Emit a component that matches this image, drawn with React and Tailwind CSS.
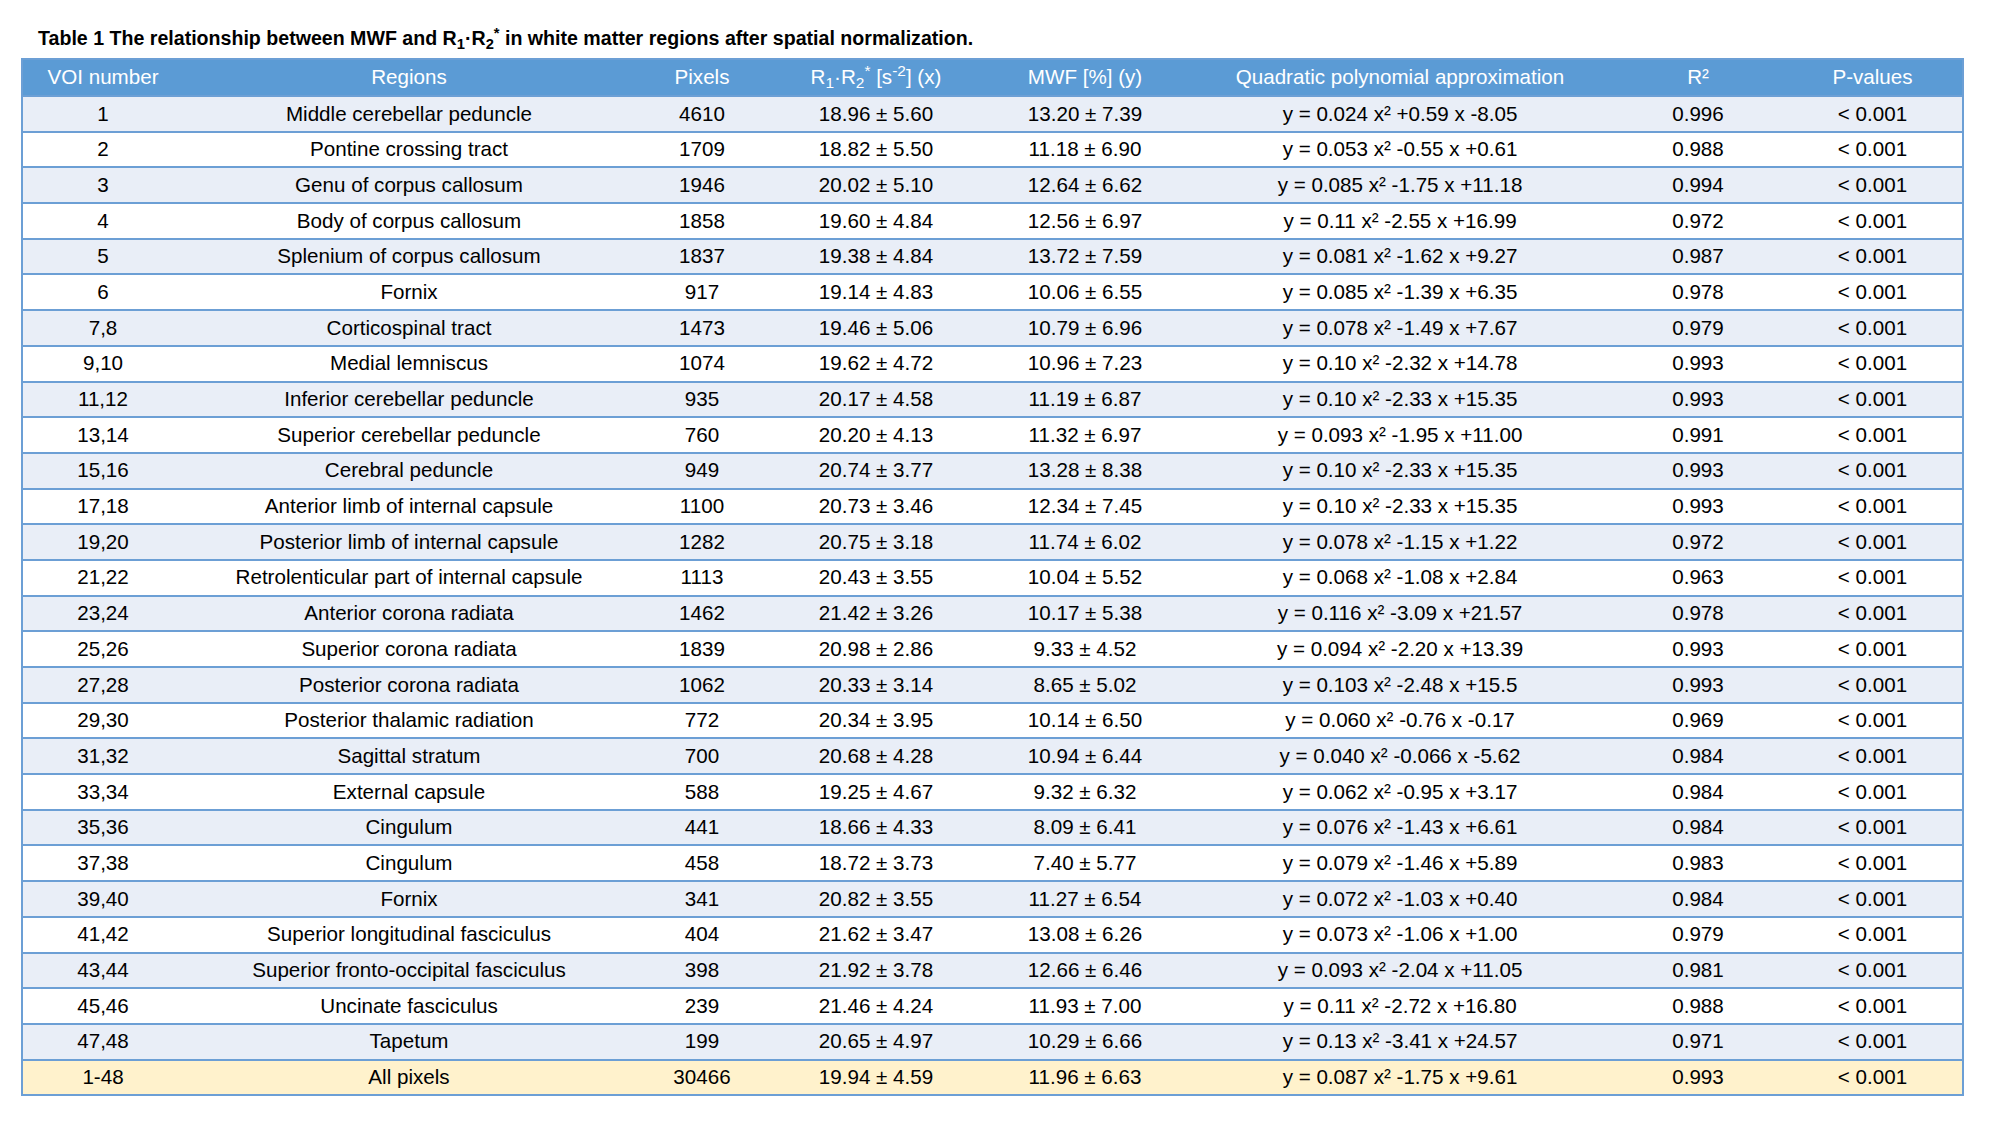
import React from "react";

const rows = [
  ["1", "Middle cerebellar peduncle", "4610", "18.96 ± 5.60", "13.20 ± 7.39", "0.024", "+0.59", "-8.05", "0.996"],
  ["2", "Pontine crossing tract", "1709", "18.82 ± 5.50", "11.18 ± 6.90", "0.053", "-0.55", "+0.61", "0.988"],
  ["3", "Genu of corpus callosum", "1946", "20.02 ± 5.10", "12.64 ± 6.62", "0.085", "-1.75", "+11.18", "0.994"],
  ["4", "Body of corpus callosum", "1858", "19.60 ± 4.84", "12.56 ± 6.97", "0.11", "-2.55", "+16.99", "0.972"],
  ["5", "Splenium of corpus callosum", "1837", "19.38 ± 4.84", "13.72 ± 7.59", "0.081", "-1.62", "+9.27", "0.987"],
  ["6", "Fornix", "917", "19.14 ± 4.83", "10.06 ± 6.55", "0.085", "-1.39", "+6.35", "0.978"],
  ["7,8", "Corticospinal tract", "1473", "19.46 ± 5.06", "10.79 ± 6.96", "0.078", "-1.49", "+7.67", "0.979"],
  ["9,10", "Medial lemniscus", "1074", "19.62 ± 4.72", "10.96 ± 7.23", "0.10", "-2.32", "+14.78", "0.993"],
  ["11,12", "Inferior cerebellar peduncle", "935", "20.17 ± 4.58", "11.19 ± 6.87", "0.10", "-2.33", "+15.35", "0.993"],
  ["13,14", "Superior cerebellar peduncle", "760", "20.20 ± 4.13", "11.32 ± 6.97", "0.093", "-1.95", "+11.00", "0.991"],
  ["15,16", "Cerebral peduncle", "949", "20.74 ± 3.77", "13.28 ± 8.38", "0.10", "-2.33", "+15.35", "0.993"],
  ["17,18", "Anterior limb of internal capsule", "1100", "20.73 ± 3.46", "12.34 ± 7.45", "0.10", "-2.33", "+15.35", "0.993"],
  ["19,20", "Posterior limb of internal capsule", "1282", "20.75 ± 3.18", "11.74 ± 6.02", "0.078", "-1.15", "+1.22", "0.972"],
  ["21,22", "Retrolenticular part of internal capsule", "1113", "20.43 ± 3.55", "10.04 ± 5.52", "0.068", "-1.08", "+2.84", "0.963"],
  ["23,24", "Anterior corona radiata", "1462", "21.42 ± 3.26", "10.17 ± 5.38", "0.116", "-3.09", "+21.57", "0.978"],
  ["25,26", "Superior corona radiata", "1839", "20.98 ± 2.86", "9.33 ± 4.52", "0.094", "-2.20", "+13.39", "0.993"],
  ["27,28", "Posterior corona radiata", "1062", "20.33 ± 3.14", "8.65 ± 5.02", "0.103", "-2.48", "+15.5", "0.993"],
  ["29,30", "Posterior thalamic radiation", "772", "20.34 ± 3.95", "10.14 ± 6.50", "0.060", "-0.76", "-0.17", "0.969"],
  ["31,32", "Sagittal stratum", "700", "20.68 ± 4.28", "10.94 ± 6.44", "0.040", "-0.066", "-5.62", "0.984"],
  ["33,34", "External capsule", "588", "19.25 ± 4.67", "9.32 ± 6.32", "0.062", "-0.95", "+3.17", "0.984"],
  ["35,36", "Cingulum", "441", "18.66 ± 4.33", "8.09 ± 6.41", "0.076", "-1.43", "+6.61", "0.984"],
  ["37,38", "Cingulum", "458", "18.72 ± 3.73", "7.40 ± 5.77", "0.079", "-1.46", "+5.89", "0.983"],
  ["39,40", "Fornix", "341", "20.82 ± 3.55", "11.27 ± 6.54", "0.072", "-1.03", "+0.40", "0.984"],
  ["41,42", "Superior longitudinal fasciculus", "404", "21.62 ± 3.47", "13.08 ± 6.26", "0.073", "-1.06", "+1.00", "0.979"],
  ["43,44", "Superior fronto-occipital fasciculus", "398", "21.92 ± 3.78", "12.66 ± 6.46", "0.093", "-2.04", "+11.05", "0.981"],
  ["45,46", "Uncinate fasciculus", "239", "21.46 ± 4.24", "11.93 ± 7.00", "0.11", "-2.72", "+16.80", "0.988"],
  ["47,48", "Tapetum", "199", "20.65 ± 4.97", "10.29 ± 6.66", "0.13", "-3.41", "+24.57", "0.971"],
];

const total = ["1-48", "All pixels", "30466", "19.94 ± 4.59", "11.96 ± 6.63", "0.087", "-1.75", "+9.61", "0.993"];

const cols = "grid grid-cols-[160px_452px_134px_214px_204px_426px_170px_179px]";

const Row = ({ r, bg }) => (
  <div className={`${cols} h-[35.7px] border-t-2 border-[#6c9fd5] ${bg} items-center text-center text-black`}>
    <div>{r[0]}</div>
    <div>{r[1]}</div>
    <div>{r[2]}</div>
    <div>{r[3]}</div>
    <div>{r[4]}</div>
    <div>
      y = {r[5]} x² {r[6]} x {r[7]}
    </div>
    <div>{r[8]}</div>
    <div>&lt; 0.001</div>
  </div>
);

export default function App() {
  return (
    <div className="w-[2000px] h-[1125px] bg-white font-['Liberation_Sans',Arial,sans-serif]">
      {/* caption */}
      <div className="pl-[38px] pt-[27px] mb-[9px] text-[19.6px] leading-[22px] font-bold text-black">
        Table 1 The relationship between MWF and R<sub>1</sub>·R<sub>2</sub>
        <sup>*</sup> in white matter regions after spatial normalization.
      </div>

      <div className="ml-[21px] w-[1943px] border-2 border-[#6c9fd5] text-[20.6px] leading-none">
        <div className={`${cols} h-[35px] bg-[#5b9bd5] items-center text-center text-white`}>
          <div>VOI number</div>
          <div>Regions</div>
          <div>Pixels</div>
          <div>
            R<sub>1</sub>·R<sub>2</sub>
            <sup>*</sup> [s<sup>-2</sup>] (x)
          </div>
          <div>MWF [%] (y)</div>
          <div>Quadratic polynomial approximation</div>
          <div>R²</div>
          <div>P-values</div>
        </div>
        {rows.map((r, i) => (
          <Row key={r[0] + i} r={r} bg={i % 2 === 0 ? "bg-[#e9eef7]" : "bg-white"} />
        ))}
        <Row r={total} bg="bg-[#fff2cc]" />
      </div>
    </div>
  );
}
